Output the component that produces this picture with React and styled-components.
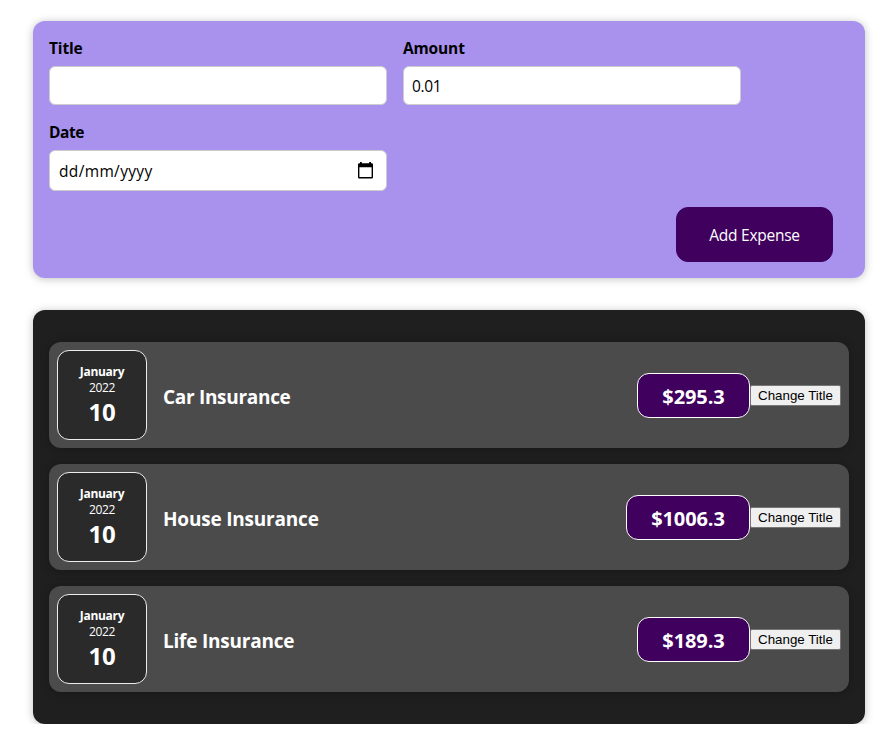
import React from "react";
import styled, { createGlobalStyle } from "styled-components";

const GlobalStyle = createGlobalStyle`
  *, *::before, *::after { box-sizing: border-box; }
  body {
    margin: 0;
    background: #fff;
    font-family: "Open Sans", "Noto Sans", sans-serif;
    overflow: hidden;
  }
`;

const Page = styled.main`
  display: flex;
  flex-direction: column;
  gap: 32px;
  width: 832px;
  margin: 21px 0 0 33px;
`;

const Panel = styled.section`
  border-radius: 12px;
  box-shadow: 0 1px 8px rgba(0, 0, 0, 0.25);
`;

const ExpenseForm = styled(Panel).attrs({ as: "form" })`
  height: 257px;
  padding: 16px;
  background: #a892ee;
`;

const Controls = styled.div`
  display: grid;
  grid-template-columns: 338px 338px;
  grid-template-rows: 68px 70px;
  gap: 16px;
  margin-bottom: 16px;
`;

const Control = styled.label`
  display: block;
`;

const LabelText = styled.span`
  display: block;
  height: 21px;
  margin-bottom: 8px;
  font-size: 15.5px;
  font-weight: 700;
  line-height: 23px;
  letter-spacing: ${(p) => p.$tracking || "-0.15px"};
`;

const Input = styled.input`
  display: block;
  width: 100%;
  height: 39px;
  padding: 1px 8px 0;
  border: 1px solid #ccc;
  border-radius: 6px;
  outline: none;
  background: #fff;
  color: #000;
  font: 400 15.5px/21px "Open Sans", "Noto Sans", sans-serif;
  letter-spacing: -0.35px;
`;

const DateField = styled.span`
  display: flex;
  align-items: center;
  justify-content: space-between;
  height: 41px;
  padding: 1px 13px 0 9px;
  border: 1px solid #ccc;
  border-radius: 6px;
  background: #fff;
  font-size: 15.5px;
  font-weight: 400;
  line-height: 21px;
  letter-spacing: 0.35px;
`;

const CalendarIcon = styled.svg`
  display: block;
  width: 15px;
  height: 17px;
  margin-top: -2px;
`;

const Actions = styled.div`
  display: flex;
  justify-content: flex-end;
  padding-right: 16px;
`;

const SubmitButton = styled.button`
  width: 157px;
  height: 55px;
  padding: 1px 0 0;
  border: 1px solid #40005d;
  border-radius: 12px;
  background: #40005d;
  color: #fff;
  font: 400 15.5px/21px "Open Sans", "Noto Sans", sans-serif;
  letter-spacing: -0.25px;
`;

const ExpenseList = styled(Panel).attrs({ as: "ul" })`
  display: flex;
  flex-direction: column;
  gap: 16px;
  height: 414px;
  margin: 0;
  padding: 32px 16px;
  background: #1f1f1f;
  list-style: none;
`;

const ExpenseRow = styled.li`
  display: flex;
  align-items: center;
  height: 106px;
  padding: 8px;
  border-radius: 12px;
  background: #4b4b4b;
  box-shadow: 0 1px 8px rgba(0, 0, 0, 0.25);
  color: #fff;
`;

const DateBox = styled.div`
  display: flex;
  flex-direction: column;
  align-items: center;
  width: 90px;
  height: 90px;
  padding-top: 13px;
  border: 1px solid #ececec;
  border-radius: 12px;
  background: #2a2a2a;
`;

const Month = styled.div`
  font-size: 12px;
  font-weight: 700;
  line-height: 16px;
  letter-spacing: -0.3px;
`;

const Year = styled.div`
  font-size: 12px;
  line-height: 16px;
  letter-spacing: -0.3px;
`;

const Day = styled.div`
  font-size: 24px;
  font-weight: 700;
  line-height: 32px;
  letter-spacing: -0.3px;
`;

const ExpenseTitle = styled.h2`
  flex: 1;
  margin: 4px 16px 0;
  font-size: 19px;
  font-weight: 700;
  line-height: 27px;
  letter-spacing: ${(p) => p.$tracking};
`;

const Price = styled.div`
  width: ${(p) => p.$width};
  height: 45px;
  margin-top: 1px;
  padding-top: 1px;
  border: 1px solid #fff;
  border-radius: 12px;
  background: #40005d;
  font-size: 20px;
  font-weight: 700;
  line-height: 43px;
  text-align: center;
  letter-spacing: -0.1px;
`;

const TitleButton = styled.button`
  width: 91px;
  height: 21px;
  padding: 0;
  border: 1px solid #767676;
  border-radius: 2px;
  background: #efefef;
  color: #000;
  font: 13.333px/17px "Liberation Sans", Arial, sans-serif;
`;

const EXPENSES = [
  { title: "Car Insurance", tracking: "-0.3px", price: "$295.3", width: "113px" },
  { title: "House Insurance", tracking: "-0.2px", price: "$1006.3", width: "124px" },
  { title: "Life Insurance", tracking: "-0.22px", price: "$189.3", width: "113px" },
];

export default function App() {
  return (
    <>
      <GlobalStyle />
      <Page>
        <ExpenseForm onSubmit={(e) => e.preventDefault()}>
          <Controls>
            <Control>
              <LabelText>Title</LabelText>
              <Input type="text" />
            </Control>
            <Control>
              <LabelText>Amount</LabelText>
              <Input type="text" defaultValue="0.01" />
            </Control>
            <Control>
              <LabelText $tracking="-0.4px">Date</LabelText>
              <DateField>
                dd/mm/yyyy
                <CalendarIcon viewBox="0 0 15 17" aria-hidden="true">
                  <path
                    fillRule="evenodd"
                    d="M2 0h1.8v1.2h7.4V0H13v1.2h.7Q15 1.2 15 2.5V15.2q0 1.3-1.3 1.3H1.3Q0 16.5 0 15.2V2.5Q0 1.2 1.3 1.2H2zM1.4 5.2v9.9h12.2V5.2z"
                  />
                </CalendarIcon>
              </DateField>
            </Control>
          </Controls>
          <Actions>
            <SubmitButton type="submit">Add Expense</SubmitButton>
          </Actions>
        </ExpenseForm>
        <ExpenseList>
          {EXPENSES.map((e) => (
            <ExpenseRow key={e.title}>
              <DateBox>
                <Month>January</Month>
                <Year>2022</Year>
                <Day>10</Day>
              </DateBox>
              <ExpenseTitle $tracking={e.tracking}>{e.title}</ExpenseTitle>
              <Price $width={e.width}>{e.price}</Price>
              <TitleButton type="button">Change Title</TitleButton>
            </ExpenseRow>
          ))}
        </ExpenseList>
      </Page>
    </>
  );
}
